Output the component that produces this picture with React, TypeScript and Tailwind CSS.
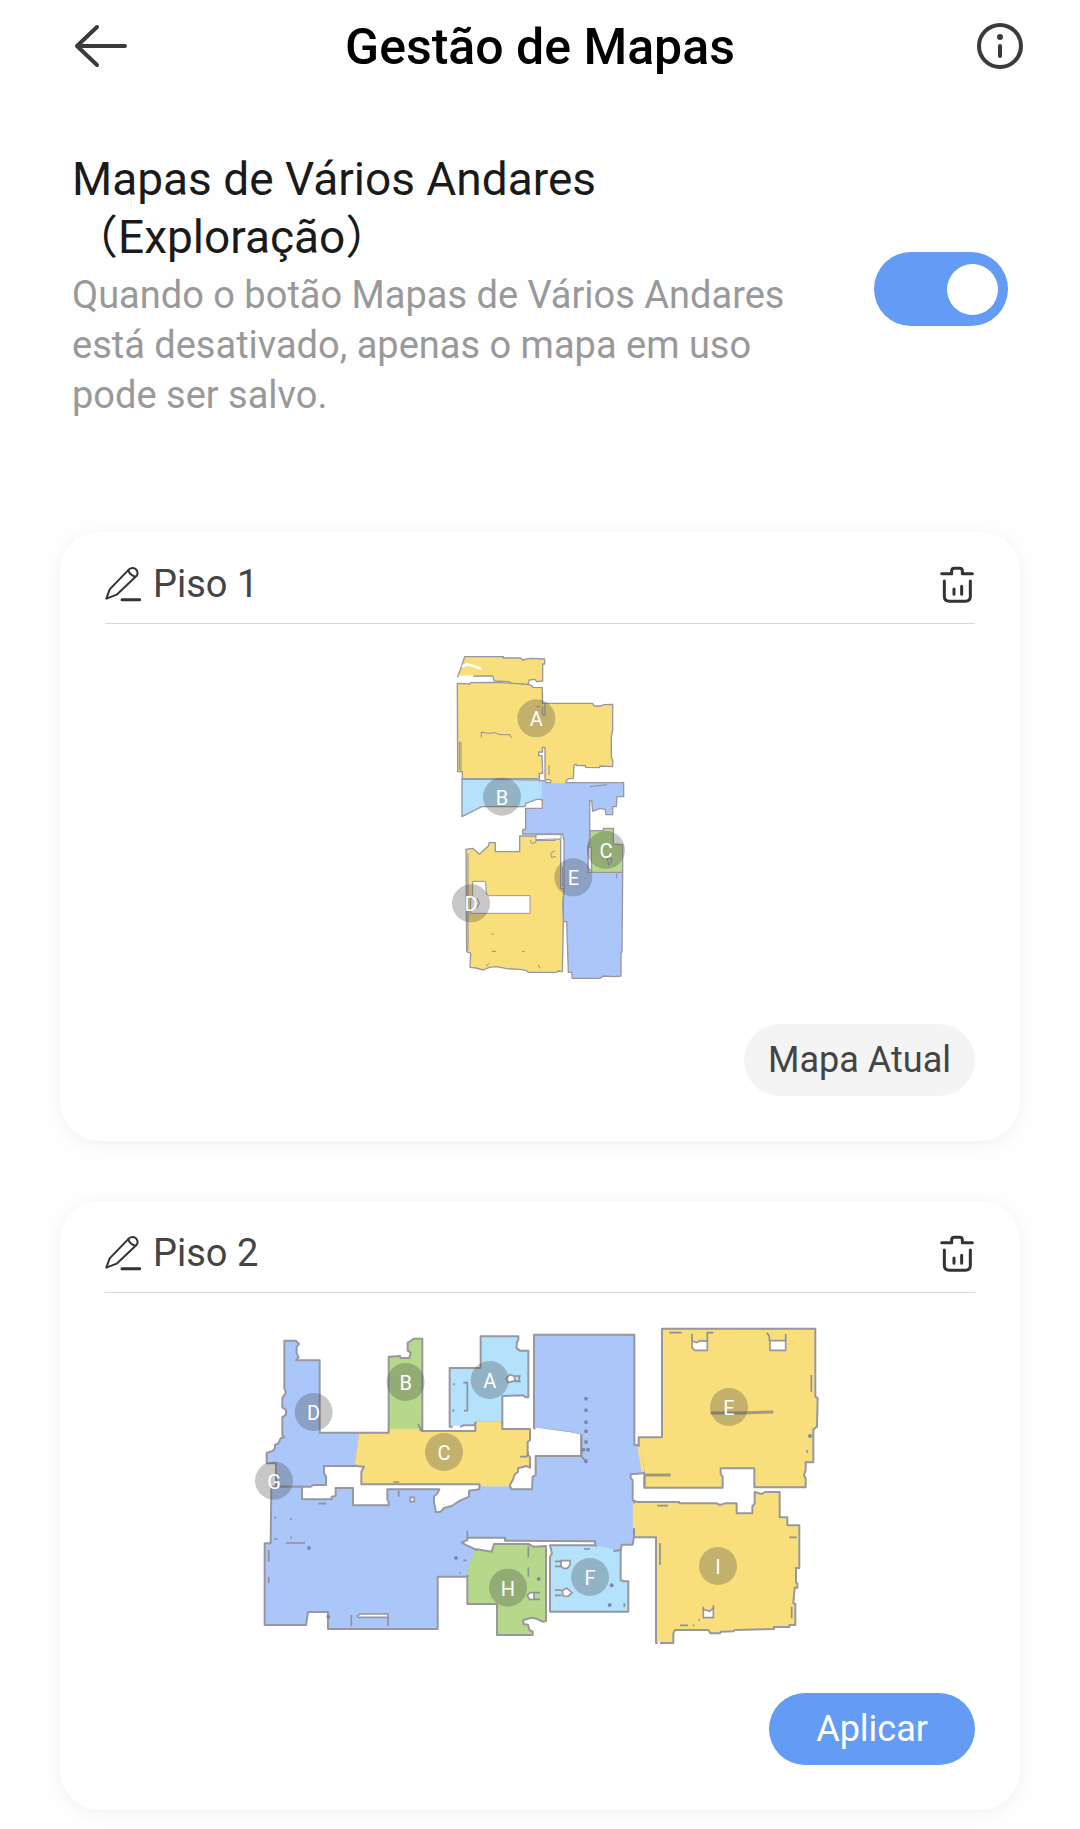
import { useState } from "react";

type Label = { t: string; x: number; y: number };
type Room = { fill: string; d: string };
type Seam = { color: string; d: string };
type FloorMap = {
  viewBox: string;
  title: string;
  wall: number;
  rooms: Room[];
  seams: Seam[];
  holes: string[];
  marks: string;
  thick?: string;
  dots: [number, number][];
  labels: Label[];
};

const YELLOW = "#f8df7c";
const BLUE = "#abc7f9";
const SKY = "#b4e2fd";
const GREEN = "#b5d88b";

const floor1: FloorMap = {
  viewBox: "0 0 600 1050",
  title: "Mapa do Piso 1",
  wall: 4,
  rooms: [
    { fill: YELLOW, d: "M74,50 H190 V54 H243 L247,60 L270,55 L314,57 V72 H308 V123 L290,125 L285,118 L268,120 L262,138 L250,132 L215,130 L205,125 L163,123 L158,108 H132 L53,110 L60,92 Z" },
    { fill: YELLOW, d: "M52,130 L90,132 L92,128 L160,127 L220,130 L270,134 L280,142 L307,143 V190 H458 L462,198 L482,198 L492,194 L518,193 V270 L514,290 V350 L518,360 V380 L480,378 L478,383 L437,382 L436,376 L410,377 L408,372 L402,376 L400,415 L385,416 L375,428 L335,426 L330,420 L315,418 V322 H307 L308,336 H296 V347 H306 L308,400 H298 V415 L67,417 V395 H53 Z" },
    { fill: SKY, d: "M66,417 L300,420 L305,428 V478 L290,478 L258,490 L255,500 H125 L66,530 Z" },
    { fill: BLUE, d: "M300,421 L316,423 L320,428 H551 V470 H531 L529,500 H518 V524 H498 L495,508 L480,505 L458,514 L455,482 H449 V590 L444,620 V697 H548 L546,935 L543,940 V1008 L525,1010 L490,1008 L480,1015 H397 L395,997 H385 L380,845 H370 V790 L372,745 V600 L368,582 H248 V570 L257,567 V505 H307 V480 H303 Z" },
    { fill: GREEN, d: "M450,572 H490 V565 H520 V612 L548,614 V697 H455 L453,625 L443,620 L450,610 Z" },
    { fill: YELLOW, d: "M78,628 L98,625 L118,643 L145,618 L148,608 H166 V635 H239 V588 H288 L290,601 H345 L350,594 L362,600 V745 L372,747 L368,790 L370,840 L367,995 L354,993 L350,997 H265 L260,992 L240,988 L200,986 L170,980 L148,982 L130,990 L108,984 L90,982 L92,940 L80,935 Z" },
  ],
  seams: [
    { color: SKY, d: "M302,424 V476" },
    { color: YELLOW, d: "M334,427 L376,427" },
    { color: "#ffffff", d: "M56,110 L100,109" },
    { color: "#ffffff", d: "M66,80 L80,73 L104,79 L124,87" },
  ],
  holes: ["M98,724 H137 L139,762 L148,767 H270 V820 H92 V780 L98,770 Z", "M288,584 H363 V597 H345 L288,599 Z", "M445,622 H454 V690 H445 Z"],
  marks:
    "M58,305 V390 M63,305 V395 M124,292 V276 L145,280 L165,278 L180,284 L210,284 L214,294 M308,160 V190 M290,200 H300 M315,192 V225 H307 V200 M327,375 V405 M84,640 V930 M272,600 Q270,610 280,610 Q292,608 288,600 M345,632 L332,640 L335,652 L348,650 M368,680 V742 M502,655 H514 V668 L506,675 Z M450,440 L500,434 M530,700 V715 M155,880 L162,884 M155,934 H168 M246,934 H254 M295,975 L300,985 M112,775 L118,790 L110,805 M138,978 L148,970",
  dots: [],
  labels: [
    { t: "A", x: 289, y: 235 },
    { t: "B", x: 186, y: 470 },
    { t: "C", x: 498, y: 630 },
    { t: "E", x: 400, y: 712 },
    { t: "D", x: 93, y: 790 },
  ],
};

const floor2: FloorMap = {
  viewBox: "0 -33 1740 1050",
  title: "Mapa do Piso 2",
  wall: 6,
  rooms: [
    { fill: BLUE, d: "M103,62 H137 L147,72 L140,80 V100 L146,112 L137,121 H209 V338 H331 L318,438 H222 V460 L228,470 V495 H190 L182,500 H78 V430 H50 V398 L66,394 L75,385 V375 L85,370 L92,355 L103,352 L97,345 V292 L108,284 V270 L97,262 V234 L108,218 L103,205 Z" },
    { fill: GREEN, d: "M416,110 L450,108 L452,114 H478 L482,98 L473,92 V68 L484,62 L490,56 H517 V332 H416 Z" },
    { fill: SKY, d: "M599,144 H692 V49 H805 V60 L800,68 V85 L810,92 H835 V232 H828 L820,226 L757,228 V308 H676 V316 H640 L632,320 H599 Z" },
    { fill: YELLOW, d: "M331,338 H416 V330 H517 V333 H676 V308 H757 V327 H840 V360 L833,366 V402 L840,412 V443 L830,438 L804,445 V456 L795,462 L788,480 L780,495 H688 V493 H334 V455 L342,440 L318,438 Z" },
    { fill: BLUE, d: "M64,500 H156 V538 H245 V530 L257,528 V504 H309 V556 H416 V545 L412,540 V508 H568 L562,520 L552,530 V546 L558,577 L572,575 L582,564 L605,558 L630,542 L657,530 V512 L688,508 V495 H778 L785,508 H846 L848,470 L857,465 V408 H994 V346 L975,342 L965,338 L900,330 L852,325 V44 H1153 V375 H1166 L1180,460 L1142,463 V475 L1148,480 V540 L1155,545 L1152,650 L1148,674 H1115 L1112,692 L1090,693 L1035,680 V664 L765,662 V653 H652 V660 L635,668 L650,676 L680,690 L660,740 L652,770 H563 V927 H234 V876 H174 L168,915 H44 V670 H62 Z" },
    { fill: GREEN, d: "M680,688 L725,695 L732,672 H835 L850,680 L888,678 V903 L878,905 L862,897 L845,893 L820,900 V912 L834,914 L838,930 L848,935 V945 H741 V852 H652 V770 L660,740 Z" },
    { fill: SKY, d: "M900,676 H1035 L1050,684 L1095,693 L1112,690 V780 L1122,784 H1135 V875 H900 V710 L906,700 Z" },
    { fill: YELLOW, d: "M1236,26 H1696 V230 L1703,234 L1701,320 L1690,328 V427 H1667 V450 L1662,465 L1667,475 V502 H1513 V445 H1412 V462 L1418,470 V503 H1183 V465 L1166,375 V352 H1236 Z" },
    { fill: YELLOW, d: "M1152,542 L1160,546 H1288 V550 H1400 L1410,555 L1425,550 H1460 V580 H1507 V560 L1514,550 V516 L1535,522 L1545,516 H1589 V592 H1612 V616 H1648 V744 H1638 V788 L1642,790 V803 H1634 L1630,850 L1636,852 V915 H1618 V921 H1572 V927 L1455,930 L1450,934 L1412,935 L1410,940 H1382 L1375,930 H1275 L1270,940 V969 H1218 V652 H1152 Z" },
  ],
  seams: [
    { color: YELLOW, d: "M331,342 L319,434" },
    { color: YELLOW, d: "M420,331 H508" },
    { color: YELLOW, d: "M680,309 H753" },
    { color: YELLOW, d: "M692,495 H777" },
    { color: GREEN, d: "M679,693 L660,740 L654,765" },
    { color: SKY, d: "M1039,681 L1090,693" },
    { color: YELLOW, d: "M1167,380 L1179,456" },
    { color: YELLOW, d: "M1153,550 V625" },
    { color: "#ffffff", d: "M856,327 L900,333 L965,342 L990,348" },
    { color: "#ffffff", d: "M608,321 H630" },
    { color: "#ffffff", d: "M1223,970 H1230" },
  ],
  holes: [
    "M1326,62 L1340,68 L1350,62 L1372,64 V91 H1334 L1326,82 Z",
    "M1560,62 H1607 V91 H1560 Z",
    "M322,888 L330,882 H414 V892 H325 Z",
    "M768,176 L778,164 L792,168 L796,182 L775,188 Z",
    "M933,722 H960 V735 L952,745 H940 L933,738 Z",
    "M936,812 L950,804 L966,818 L954,829 L940,828 Z",
    "M832,826 L840,818 H852 V838 H838 Z",
    "M1360,868 L1378,874 L1390,864 V893 H1360 Z",
    "M481,532 H493 V545 H481 Z",
  ],
  marks:
    "M612,190 V196 M640,188 H652 V272 H642 M610,268 V275 M795,168 H812 M795,184 H812 M808,168 V184 M56,690 V725 M56,770 V790 M108,669 H165 M72,593 H78 M120,597 H126 M72,657 H82 M120,653 H126 M640,721 H650 M630,756 V760 M205,551 H228 M304,885 V918 M414,892 V918 M430,486 H448 M446,512 V530 M652,632 V654 M835,742 V770 M835,680 V712 M1258,38 H1295 M1326,42 V62 M1372,64 V38 H1390 M1550,38 L1558,48 V62 M1607,42 V62 M1684,165 V215 M1222,557 H1254 M1230,670 V735 M1618,652 H1640 M1290,916 H1314 M1328,916 H1333 M1625,860 V895 M1360,860 V870 M1390,856 V866 M1347,898 V902 M915,724 H935 M915,739 H935 M915,810 H935 M915,826 H935 M852,818 H870 M852,838 H870 M1002,687 H1020 M1123,850 V862 M1184,468 V500 M994,346 V408 L1008,425 M504,312 L517,336 M810,410 H830 L835,395 M78,500 H110 M1152,625 V645 M1671,390 V398",
  thick: "M1183,465 H1262 M1382,279 H1470 L1570,276",
  dots: [
    [1008, 236], [1008, 271], [1008, 307], [1008, 334], [1008, 366], [1000, 389], [1014, 389], [1008, 424],
    [1085, 796], [1079, 855], [866, 777], [177, 684], [618, 714], [1680, 348], [235, 890],
  ],
  labels: [
    { t: "A", x: 719, y: 180 },
    { t: "B", x: 467, y: 186 },
    { t: "C", x: 582, y: 396 },
    { t: "D", x: 191, y: 276 },
    { t: "G", x: 72, y: 482 },
    { t: "H", x: 774, y: 803 },
    { t: "F", x: 1020, y: 771 },
    { t: "E", x: 1437, y: 261 },
    { t: "I", x: 1404, y: 738 },
  ],
};

function FloorPlan({ map }: { map: FloorMap }) {
  return (
    <svg viewBox={map.viewBox} role="img" aria-label={map.title} className="h-[350px] w-full">
      <g stroke="#9897a0" strokeWidth={map.wall} strokeLinejoin="round">
        {map.rooms.map((r) => (
          <path key={r.d} d={r.d} fill={r.fill} />
        ))}
      </g>
      {map.seams.map((s) => (
        <path key={s.d} d={s.d} stroke={s.color} strokeWidth={map.wall + 3} fill="none" />
      ))}
      {map.holes.map((h) => (
        <path key={h} d={h} fill="#ffffff" stroke="#9897a0" strokeWidth={map.wall - 1} />
      ))}
      <path d={map.marks} fill="none" stroke="#8f8f98" strokeWidth={map.wall - 1} />
      {map.thick && <path d={map.thick} fill="none" stroke="#a09880" strokeWidth="9" />}
      {map.dots.map(([x, y]) => (
        <circle key={`${x}-${y}`} cx={x} cy={y} r="6" fill="#8089a4" />
      ))}
      {map.labels.map((l) => (
        <g key={l.t}>
          <circle cx={l.x} cy={l.y} r="57" fill="#464646" fillOpacity="0.3" />
          <text x={l.x} y={l.y + 24} textAnchor="middle" fontSize="60" fill="#ffffff">
            {l.t}
          </text>
        </g>
      ))}
    </svg>
  );
}

function PencilIcon() {
  return (
    <svg width="36" height="36" viewBox="0 0 108 108" fill="none" stroke="#333" strokeWidth="6" strokeLinejoin="round" strokeLinecap="round" aria-hidden="true">
      <path d="M4,98 L14,70 L72,10 Q82,2 92,9 Q102,18 95,29 L35,86 Z" />
      <path d="M70,13 Q74,28 91,32" />
      <path d="M51,101 H104" strokeWidth="9" />
    </svg>
  );
}

function TrashIcon() {
  return (
    <svg width="36" height="38" viewBox="0 0 108 114" fill="none" stroke="#333" strokeWidth="9" strokeLinecap="round" strokeLinejoin="round" aria-hidden="true">
      <path d="M8,26 H38 V18 Q38,10 46,10 H62 Q70,10 70,18 V26 H100" />
      <path d="M16,48 V94 Q16,109 31,109 H79 Q94,109 94,94 V48" />
      <path d="M45,72 V88 M68,64 V88" />
    </svg>
  );
}

function FloorCard({ name, map, current }: { name: string; map: FloorMap; current?: boolean }) {
  return (
    <section className="flex flex-col rounded-[40px] bg-white px-[45px] pb-[45px] shadow-[0_3px_14px_3px_rgba(0,0,0,0.04)]">
      <div className="flex h-[92px] items-center justify-between border-b border-[#d8d8d8] pt-3">
        <button type="button" aria-label={`Renomear ${name}`} className="flex items-center gap-3 text-[#444]">
          <PencilIcon />
          <h2 className="text-[38px] leading-[44px]">{name}</h2>
        </button>
        <button type="button" aria-label={`Excluir ${name}`}>
          <TrashIcon />
        </button>
      </div>
      <div className="mt-4">
        <FloorPlan map={map} />
      </div>
      {current ? (
        <button type="button" className="mt-[34px] h-[72px] self-end rounded-full bg-[#f4f4f4] px-6 text-[36px] leading-[44px] text-[#444]">
          Mapa Atual
        </button>
      ) : (
        <button type="button" className="mt-[34px] h-[72px] self-end rounded-full bg-[#649bf4] px-[47px] text-[36px] leading-[44px] text-white">
          Aplicar
        </button>
      )}
    </section>
  );
}

export default function App() {
  const [multi, setMulti] = useState(true);
  return (
    <main className="min-h-screen bg-[#fefefe] pb-[18px] font-['Roboto','Noto_Sans_CJK_SC',sans-serif]">
      <header className="grid h-[92px] grid-cols-[1fr_auto_1fr] items-center">
        <button type="button" aria-label="Voltar" className="ml-[74px] justify-self-start">
          <svg width="54" height="44" viewBox="0 0 54 44" fill="none" stroke="#3a3a3c" strokeWidth="4" strokeLinecap="round" strokeLinejoin="round" aria-hidden="true">
            <path d="M23,3 L3,22 L23,41 M3,22 H51" />
          </svg>
        </button>
        <h1 className="pt-0.5 text-[50px] leading-[58px] font-medium text-black">Gestão de Mapas</h1>
        <button type="button" aria-label="Informações" className="mr-[57px] justify-self-end">
          <svg width="46" height="46" viewBox="0 0 46 46" fill="none" stroke="#3a3a3c" strokeWidth="4" strokeLinecap="round" aria-hidden="true">
            <circle cx="23" cy="23" r="21" />
            <path d="M23,23 V33" />
            <circle cx="23" cy="14" r="3" fill="#3a3a3c" stroke="none" />
          </svg>
        </button>
      </header>

      <section className="mt-[58px] flex items-center justify-between px-[72px]">
        <div className="max-w-[730px]">
          <label htmlFor="multi" className="block text-[46px] leading-[58px] text-[#1a1a1a]">
            Mapas de Vários Andares
            <br />
            （Exploração）
          </label>
          <p id="multi-desc" className="mt-1 text-[38px] leading-[50px] text-[#999]">
            Quando o botão Mapas de Vários Andares está desativado, apenas o mapa em uso pode ser salvo.
          </p>
        </div>
        <input
          id="multi"
          type="checkbox"
          role="switch"
          aria-describedby="multi-desc"
          checked={multi}
          onChange={(e) => setMulti(e.target.checked)}
          className="mt-2 flex h-[74px] w-[134px] shrink-0 cursor-pointer appearance-none items-center rounded-full bg-gray-300 px-[10px] before:size-[51px] before:rounded-full before:bg-white before:content-[''] checked:justify-end checked:bg-[#649bf4]"
        />
      </section>

      <div className="mt-[112px] flex flex-col gap-[60px] px-[60px]">
        <FloorCard name="Piso 1" map={floor1} current />
        <FloorCard name="Piso 2" map={floor2} />
      </div>
    </main>
  );
}
